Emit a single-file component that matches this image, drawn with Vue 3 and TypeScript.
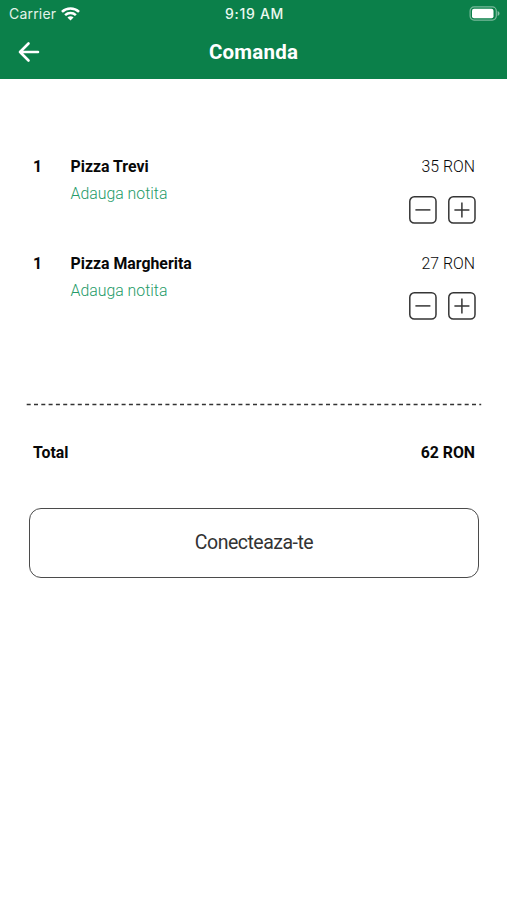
<script setup lang="ts">
import { computed, ref } from 'vue'

interface OrderItem {
  id: number
  name: string
  price: number
  quantity: number
}

const items = ref<OrderItem[]>([
  { id: 1, name: 'Pizza Trevi', price: 35, quantity: 1 },
  { id: 2, name: 'Pizza Margherita', price: 27, quantity: 1 },
])

const total = computed(() => items.value.reduce((sum, item) => sum + item.price * item.quantity, 0))

function changeQuantity(item: OrderItem, step: number) {
  item.quantity = Math.max(0, item.quantity + step)
}
</script>

<template>
  <div class="screen">
    <header class="header">
      <div class="status-bar">
        <div class="carrier">
          <span class="carrier-name">Carrier</span>
          <svg class="wifi" width="19" height="14" viewBox="0 0 18 14" preserveAspectRatio="none" fill="none" stroke="#fff" stroke-width="2.4">
            <path d="M.9 4.9C5.5.4 12.5.4 17.1 4.9" />
            <path d="M3.9 8.1C6.8 5.3 11.2 5.3 14.1 8.1" />
            <path d="M9 13.5 6.1 10.5C7.8 8.9 10.2 8.9 11.9 10.5Z" fill="#fff" stroke="none" />
          </svg>
        </div>
        <time class="clock">9:19 AM</time>
        <svg class="battery" width="31" height="15" viewBox="0 0 31 15">
          <rect x="1.1" y=".9" width="26.2" height="13.2" rx="4" fill="none" stroke="#fff" stroke-opacity=".45" stroke-width="1.2" />
          <rect x="3" y="2.8" width="21.5" height="9.4" rx="2" fill="#fff" />
          <path d="M28.6 5v5c1.2-.5 1.9-1.4 1.9-2.5S29.8 5.5 28.6 5Z" fill="#fff" fill-opacity=".5" />
        </svg>
      </div>
      <div class="nav-bar">
        <button class="back" aria-label="Inapoi">
          <svg width="22" height="22" viewBox="0 0 22 22" fill="none" stroke="#fff" stroke-width="2.6" stroke-linecap="round" stroke-linejoin="round">
            <path d="M20 11H2M10.5 2.5 2 11l8.500 8.500" />
          </svg>
        </button>
        <h1 class="title">Comanda</h1>
      </div>
    </header>

    <main class="content">
      <ul class="items">
        <li v-for="item in items" :key="item.id" class="item">
          <span class="quantity">{{ item.quantity }}</span>
          <div class="details">
            <span class="name">{{ item.name }}</span>
            <a class="note">Adauga notita</a>
          </div>
          <div class="side">
            <span class="price">{{ item.price }} RON</span>
            <div class="stepper">
              <button class="step" aria-label="Scade" @click="changeQuantity(item, -1)">
                <svg width="28" height="28" viewBox="0 0 28 28" fill="none" stroke="#353535" stroke-width="1.5">
                  <rect x=".8" y=".8" width="26.2" height="26.2" rx="4.5" />
                  <path d="M6.4 13.9h15" />
                </svg>
              </button>
              <button class="step" aria-label="Adauga" @click="changeQuantity(item, 1)">
                <svg width="28" height="28" viewBox="0 0 28 28" fill="none" stroke="#353535" stroke-width="1.5">
                  <rect x=".8" y=".8" width="26.2" height="26.2" rx="4.5" />
                  <path d="M6.4 13.9h15M13.9 6.4v15" />
                </svg>
              </button>
            </div>
          </div>
        </li>
      </ul>
      <svg class="divider" width="456" height="3" viewBox="0 0 456 3" stroke="#333" stroke-width="1.3" stroke-dasharray="4 3.3">
        <path d="M.7 1.500H455.200" />
      </svg>
      <div class="total">
        <span class="total-label">Total</span>
        <span class="total-value">{{ total }} RON</span>
      </div>
      <button class="connect">Conecteaza-te</button>
    </main>
  </div>
</template>

<style>
body {
  margin: 0;
  background: #fff;
}
</style>

<style scoped>
.screen {
  min-height: 900px;
  background: #fff;
  color: #080808;
  font-family: Roboto, 'Liberation Sans', sans-serif;
}

button {
  display: block;
  margin: 0;
  padding: 0;
  border: 0;
  background: none;
  font: inherit;
  color: inherit;
}

svg {
  display: block;
}

.header {
  height: 79px;
  background: #0b804a;
  color: #fff;
}

.status-bar {
  display: grid;
  grid-template-columns: 1fr auto 1fr;
  align-items: center;
  height: 27px;
  padding: 0 7px 0 9px;
}

.carrier {
  display: flex;
  align-items: center;
  gap: 5px;
}

.carrier-name {
  font-family: Inter, sans-serif;
  font-size: 14px;
  letter-spacing: 0.2px;
  color: #e3f3e9;
}

.clock {
  font-family: Inter, sans-serif;
  font-size: 14px;
  font-weight: 500;
  letter-spacing: 0.7px;
  color: #ecf8f0;
}

.battery {
  justify-self: end;
}

.nav-bar {
  display: grid;
  grid-template-columns: 40px 1fr 40px;
  align-items: center;
  height: 50px;
  padding: 0 18px;
}

.title {
  margin: 0;
  font-size: 20.5px;
  font-weight: 700;
  line-height: 24px;
  letter-spacing: 0.2px;
  text-align: center;
}

.content {
  padding: 76px 26px 0;
}

.items {
  display: flex;
  flex-direction: column;
  gap: 28px;
  margin: 0;
  padding: 0 5px 0 7px;
  list-style: none;
}

.item {
  display: grid;
  grid-template-columns: 37px 1fr auto;
  height: 68.5px;
  font-size: 15.85px;
  line-height: 24px;
}

.quantity,
.name {
  font-weight: 700;
}

.details {
  display: flex;
  flex-direction: column;
  align-items: flex-start;
  gap: 3px;
  padding-left: 0.5px;
}

.note {
  color: #249b68;
  font-weight: 300;
}

.side {
  display: flex;
  flex-direction: column;
  align-items: flex-end;
  gap: 16.8px;
}

.price {
  padding-right: 1px;
  font-weight: 300;
}

.stepper {
  display: flex;
  gap: 11px;
}

.divider {
  margin-top: 83px;
}

.total {
  display: flex;
  justify-content: space-between;
  margin-top: 34.5px;
  padding: 0 6px 0 7px;
  font-size: 15.85px;
  font-weight: 700;
  line-height: 24px;
}

.connect {
  box-sizing: border-box;
  width: 450px;
  height: 70px;
  margin: 43.5px 0 0 3px;
  padding-bottom: 1px;
  border: 1.5px solid #4b4b4b;
  border-radius: 12px;
  font-size: 19.5px;
  letter-spacing: -0.5px;
  color: #333;
}
</style>
